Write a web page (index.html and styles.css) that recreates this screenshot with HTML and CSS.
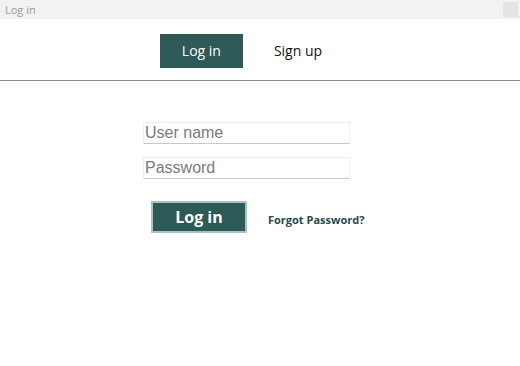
FILE: index.html
```html
<!DOCTYPE html>
<html lang="en">
<head>
    <meta charset="UTF-8">
    <meta name="viewport" content="width=device-width, initial-scale=1.0">
    <title>Log in</title>
    <link rel="stylesheet" href="styles.css">
</head>
<body>
    <div class="title-bar">
        <span class="title-text">Log in</span>
        <span class="close-btn"></span>
    </div>

    <div class="tabs">
        <a href="#" class="tab active">Log in</a>
        <a href="#" class="tab">Sign up</a>
    </div>

    <div class="login-form">
        <input type="text" class="field" placeholder="User name">
        <input type="password" class="field" placeholder="Password">
        <div class="actions">
            <button class="login-btn">Log in</button>
            <a href="#" class="forgot-link">Forgot Password?</a>
        </div>
    </div>
</body>
</html>
```

FILE: styles.css
```css
:root {
    --primary-color: #2d5956;
    --text-color: #111;
    --white: #fff;
    --title-bg: #f2f2f2;
    --line: #8a8a8a;
}

body {
    font-family: 'Open Sans', 'Noto Sans', sans-serif;
    margin: 0;
    padding: 0;
    background-color: var(--white);
    color: var(--text-color);
}

.title-bar {
    height: 19px;
    background-color: var(--title-bg);
    display: flex;
    align-items: center;
    justify-content: space-between;
    padding: 0 2px 0 5px;
}

.title-text {
    font-size: 11px;
    color: #9a9a9a;
}

.close-btn {
    width: 15px;
    height: 15px;
    background-color: #e4e4e4;
}

.tabs {
    display: flex;
    justify-content: center;
    align-items: center;
    gap: 31px;
    padding: 15px 0 12px;
    padding-right: 38px;
    border-bottom: 1px solid var(--line);
}

.tab {
    font-size: 14px;
    color: var(--text-color);
    text-decoration: none;
    line-height: 34px;
}

.tab.active {
    background-color: var(--primary-color);
    color: var(--white);
    width: 83px;
    text-align: center;
}

.login-form {
    width: 207px;
    margin: 41px 0 0 143px;
    display: flex;
    flex-direction: column;
}

.field {
    height: 22px;
    margin-bottom: 13px;
    padding: 0 1px;
    border: 1px solid #efefef;
    border-bottom: 1px solid #c8c8c8;
    box-sizing: border-box;
    font-family: 'Liberation Sans', Arial, sans-serif;
    font-size: 16px;
    outline: none;
}

.field::placeholder {
    color: #7a7a7a;
}

.actions {
    display: flex;
    align-items: center;
    margin-top: 9px;
    padding-left: 8px;
    white-space: nowrap;
}

.login-btn {
    flex-shrink: 0;
    width: 96px;
    height: 32px;
    background-color: var(--primary-color);
    border: 2px solid #a9c2c4;
    color: var(--white);
    font-family: 'Open Sans', 'Noto Sans', sans-serif;
    font-size: 16px;
    font-weight: bold;
    padding: 0;
    cursor: pointer;
}

.forgot-link {
    margin-left: 21px;
    margin-top: 4px;
    font-size: 11px;
    font-weight: bold;
    color: #264a49;
    text-decoration: none;
}
```
